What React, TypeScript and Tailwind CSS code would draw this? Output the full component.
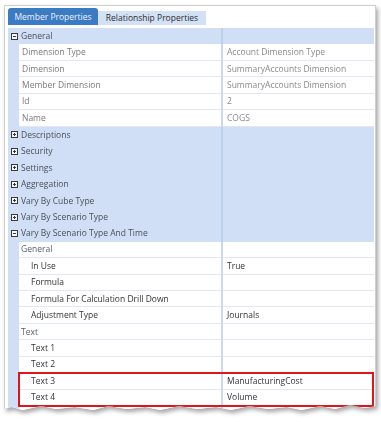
import React from "react";

type Row =
  | { kind: "cat"; label: string; open?: boolean }
  | { kind: "sub"; label: string }
  | { kind: "prop"; label: string; value?: string; indent?: boolean; dim?: boolean };

const rows: Row[] = [
  { kind: "cat", label: "General", open: true },
  { kind: "prop", label: "Dimension Type", value: "Account Dimension Type", dim: true },
  { kind: "prop", label: "Dimension", value: "SummaryAccounts Dimension", dim: true },
  { kind: "prop", label: "Member Dimension", value: "SummaryAccounts Dimension", dim: true },
  { kind: "prop", label: "Id", value: "2", dim: true },
  { kind: "prop", label: "Name", value: "COGS", dim: true },
  { kind: "cat", label: "Descriptions" },
  { kind: "cat", label: "Security" },
  { kind: "cat", label: "Settings" },
  { kind: "cat", label: "Aggregation" },
  { kind: "cat", label: "Vary By Cube Type" },
  { kind: "cat", label: "Vary By Scenario Type" },
  { kind: "cat", label: "Vary By Scenario Type And Time", open: true },
  { kind: "sub", label: "General" },
  { kind: "prop", label: "In Use", value: "True", indent: true },
  { kind: "prop", label: "Formula", indent: true },
  { kind: "prop", label: "Formula For Calculation Drill Down", indent: true },
  { kind: "prop", label: "Adjustment Type", value: "Journals", indent: true },
  { kind: "sub", label: "Text" },
  { kind: "prop", label: "Text 1", indent: true },
  { kind: "prop", label: "Text 2", indent: true },
];

const highlighted: Row[] = [
  { kind: "prop", label: "Text 3", value: "ManufacturingCost", indent: true },
  { kind: "prop", label: "Text 4", value: "Volume", indent: true },
];

const Toggle = ({ open }: { open?: boolean }) => (
  <svg width="7" height="7" viewBox="0 0 7 7" className="block">
    <rect x="0.5" y="0.5" width="6" height="6" fill="#f4f6fa" stroke="#3a3a3a" strokeWidth="1" />
    <path d="M2 3.5h3" stroke="#3a3a3a" strokeWidth="1" />
    {!open && <path d="M3.5 2v3" stroke="#3a3a3a" strokeWidth="1" />}
  </svg>
);

const GridRow = ({ row }: { row: Row }) => {
  if (row.kind === "cat") {
    return (
      <div className="flex h-[16.45px] items-center bg-[#d0dff5] text-[#4a4f5a]">
        <div className="flex w-[11px] shrink-0 justify-center pl-[1px]">
          <Toggle open={row.open} />
        </div>
        <div className="w-[202px] shrink-0 whitespace-nowrap pl-[2px]">{row.label}</div>
        <div className="h-full w-[2px] shrink-0 bg-[#bccfeb]" />
        <div className="flex-1" />
      </div>
    );
  }
  return (
    <div className="flex h-[16.45px] items-stretch">
      <div className="w-[11px] shrink-0 bg-[#d0dff5]" />
      <div
        className={`flex w-[202px] shrink-0 items-center whitespace-nowrap border-b border-[#e1e8f3] bg-white ${
          row.kind === "sub"
            ? "pl-[2px] text-[#5a6070]"
            : row.indent
            ? "pl-[12px] text-[#333]"
            : "pl-[3px] text-[#7a7a7a]"
        }`}
      >
        {row.label}
      </div>
      <div className="w-[2px] shrink-0 bg-[#c9d9f0]" />
      <div
        className={`flex flex-1 items-center whitespace-nowrap border-b border-[#e1e8f3] bg-white pl-[4px] ${
          row.kind === "prop" && row.dim ? "text-[#8a8a8a]" : "text-[#333]"
        }`}
      >
        {row.kind === "prop" ? row.value : ""}
      </div>
    </div>
  );
};

const torn =
  "polygon(0 0,100% 0,100% 401px,97% 403px,93% 400px,89% 404px,85% 401px,80% 405px,76% 402px,71% 404px,66% 401px,61% 405px,57% 402px,52% 404px,47% 401px,42% 405px,38% 402px,33% 404px,28% 401px,24% 405px,19% 402px,14% 404px,10% 401px,5% 405px,2% 402px,0 404px)";

export default function App() {
  return (
    <div className="h-[422px] w-[381px] overflow-hidden bg-white pl-[4px] pt-[5px] font-['Open_Sans',sans-serif] text-[8.5px] leading-[12px]">
      <div className="w-[372px] [filter:drop-shadow(2px_3px_2px_rgba(0,0,0,0.35))]">
        <div
          className="h-[408px] border border-[#cfcfcf] bg-white px-[3px] pt-[2px]"
          style={{ clipPath: torn }}
        >
          <div className="flex h-[17px] items-end">
            <div className="flex h-[17px] w-[90px] items-center justify-center rounded-t-[3px] bg-[#3b7bc4] text-[#eef3fb]">
              Member Properties
            </div>
            <div className="flex h-[14px] w-[108px] items-center justify-center bg-[#d3e1f6] text-[#2c2c2c]">
              Relationship Properties
            </div>
          </div>
          <div className="mt-[3px] w-[366px]">
            {rows.map((r, i) => (
              <GridRow key={i} row={r} />
            ))}
            <div className="relative">
              {highlighted.map((r, i) => (
                <GridRow key={i} row={r} />
              ))}
              <div className="pointer-events-none absolute -top-[1px] bottom-[-1px] left-[10px] right-[0px] border-2 border-[#e0141b]" />
            </div>
            <GridRow row={{ kind: "prop", label: "", indent: true }} />
          </div>
        </div>
      </div>
    </div>
  );
}
